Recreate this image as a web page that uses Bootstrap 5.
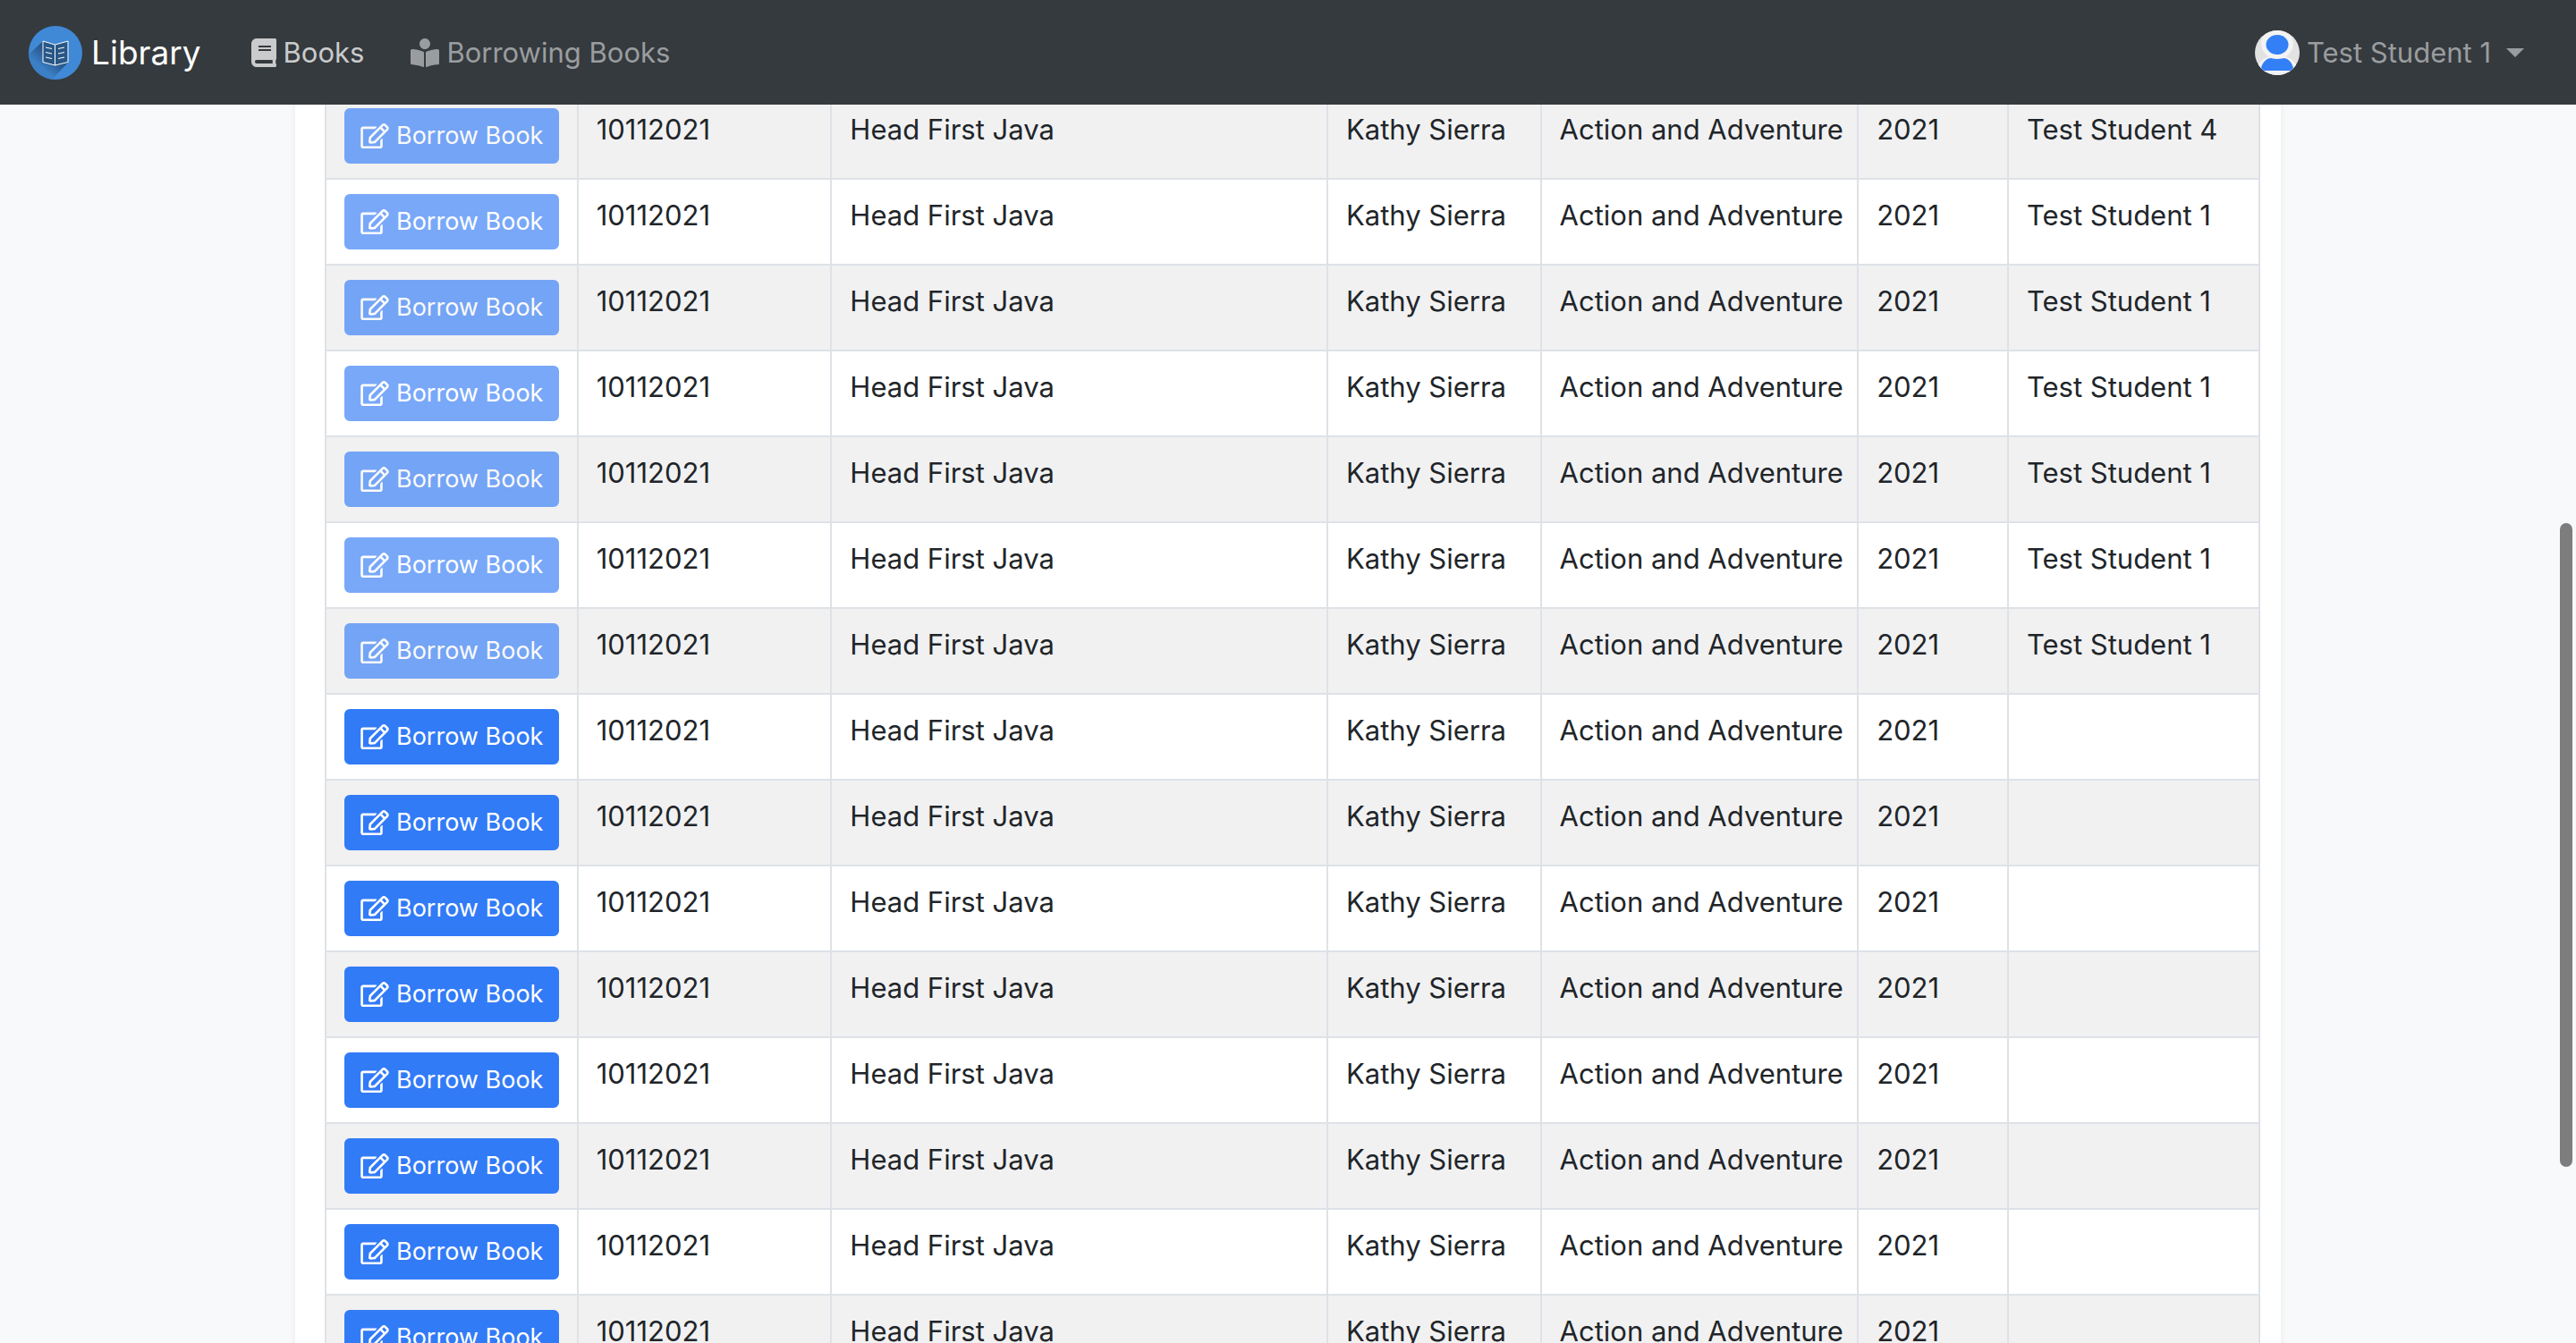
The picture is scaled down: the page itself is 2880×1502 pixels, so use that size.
<!DOCTYPE html>
<html lang="en">
<head>
<meta charset="utf-8">
<meta name="viewport" content="width=device-width, initial-scale=1">
<title>Library</title>
<link href="https://cdn.jsdelivr.net/npm/bootstrap@5.3.0/dist/css/bootstrap.min.css" rel="stylesheet">
<style>
  html { height: 100%; }
  body {
    height: 100%;
    overflow: hidden;
    padding-top: 103px;
    background: #f8f9fb;
    color: #212529;
    font-family: Inter, "Liberation Sans", sans-serif;
    font-size: 31px;
    line-height: 48px;
  }
  .site-nav { height: 117px; padding: 0 58px 0 32px; background: #353a3e; }
  .site-nav .navbar-brand { font-size: 37px; line-height: 60px; gap: 10px; margin-right: 56px; padding: 0; }
  .site-nav .navbar-nav { gap: 52px; }
  .site-nav .nav-link { display: flex; align-items: center; gap: 8px; color: #9a9d9f; white-space: nowrap; }
  .site-nav .nav-link.active { color: #cacbcc; }
  .site-nav .user-link::after { margin-left: 9px; border-top: 10px solid; border-right: 10px solid transparent; border-left: 10px solid transparent; }
  .nav-icon { height: 32px; fill: currentColor; }
  .brand-logo { width: 60px; height: 60px; }
  .user-avatar { width: 50px; height: 50px; }
  .book-panel { max-width: 2220px; padding: 0 23px 32px 33px; background: #fff; box-shadow: 0 4px 8px rgba(0, 0, 0, .075); }
  .book-table { table-layout: fixed; border-color: #dee2e7; --bs-table-striped-bg: #f1f1f2; --bs-table-striped-color: #212529; --bs-table-color: #212529; --bs-table-bg: #fff; }
  .book-table > tbody > tr { border-width: 2px 0; }
  .book-table > tbody > tr > td { height: 96px; padding: 16px 20px; border-width: 0 2px; white-space: nowrap; vertical-align: top; }
  .borrow-btn {
    --bs-btn-bg: #327bf7; --bs-btn-border-color: #327bf7;
    --bs-btn-disabled-bg: #327bf7; --bs-btn-disabled-border-color: #327bf7;
    --bs-btn-disabled-opacity: .65;
    display: flex; align-items: center; gap: 8px; width: 240px; height: 62px;
    padding: 0 16px; border-width: 2px; border-radius: 6px; font-size: 27px; line-height: 42px;
  }
  .borrow-btn svg { width: 32px; height: 28px; fill: currentColor; flex: none; }
  .scroll-thumb { position: fixed; top: 585px; right: 4px; width: 14px; height: 720px; border-radius: 7px; background: #7d7d7d; z-index: 1040; }
</style>
</head>
<body>
<svg class="d-none" aria-hidden="true">
  <symbol id="edit" viewBox="0 0 576 512"><path d="M402.3 344.9l32-32c5-5 13.7-1.5 13.7 5.7V464c0 26.5-21.5 48-48 48H48c-26.5 0-48-21.5-48-48V112c0-26.5 21.5-48 48-48h273.5c7.1 0 10.7 8.6 5.7 13.7l-32 32c-1.5 1.5-3.5 2.3-5.7 2.3H48v352h352V350.5c0-2.1.8-4.1 2.3-5.6zm156.6-201.8L296.3 405.7l-90.4 10c-26.2 2.9-48.5-19.2-45.6-45.6l10-90.4L432.9 17.1c22.9-22.9 59.9-22.9 82.7 0l43.2 43.2c22.9 22.9 22.9 60 .1 82.8zM460.1 174L402 115.9 216.2 301.8l-7.3 65.3 65.3-7.3L460.1 174zm64.8-79.7l-43.2-43.2c-4.1-4.1-10.8-4.1-14.8 0L436 82l58.1 58.1 30.9-30.9c4-4.2 4-10.8-.1-14.9z"/></symbol>
</svg>

<nav class="navbar navbar-expand navbar-dark fixed-top site-nav">
  <a class="navbar-brand d-flex align-items-center" href="#">
    <svg class="brand-logo" viewBox="0 0 60 60" aria-hidden="true">
      <defs>
        <linearGradient id="fall" x1="34" y1="22" x2="14" y2="46" gradientUnits="userSpaceOnUse"><stop offset="0" stop-color="#1f4873"/><stop offset=".5" stop-color="#2a5a90"/><stop offset="1" stop-color="#3b7fc6"/></linearGradient>
        <clipPath id="disc"><circle cx="30" cy="30" r="30"/></clipPath>
      </defs>
      <g clip-path="url(#disc)">
        <rect width="60" height="60" fill="#4089d6"/>
        <path d="M16 17L0 32V60H26L44 41V17L29.500 21Z" fill="url(#fall)"/>
      </g>
      <g fill="#285787" stroke="#fff" stroke-width="1" stroke-linejoin="round">
        <path d="M16 17l13.500 4v23L16 40.500z"/><path d="M44 17l-14.500 4v23L44 40.500z"/>
        <path d="M19 24l7 1.500M19 29.500l7 1.500M19 35l7 1.500M33 25.500l7-1.500M33 31l7-1.500M33 36.500l7-1.500" fill="none"/>
      </g>
    </svg>
    <span>Library</span>
  </a>
  <ul class="navbar-nav">
    <li class="nav-item"><a class="nav-link active p-0" href="#">
      <svg class="nav-icon" viewBox="0 0 448 512" aria-hidden="true"><path d="M448 360V24c0-13.300-10.700-24-24-24H96C43 0 0 43 0 96v320c0 53 43 96 96 96h328c13.300 0 24-10.700 24-24v-16c0-7.500-3.500-14.300-8.900-18.700-4.200-15.400-4.200-59.300 0-74.700 5.400-4.300 8.900-11.100 8.900-18.600zM128 134c0-3.300 2.700-6 6-6h212c3.300 0 6 2.700 6 6v20c0 3.300-2.700 6-6 6H134c-3.300 0-6-2.700-6-6v-20zm0 64c0-3.300 2.700-6 6-6h212c3.300 0 6 2.700 6 6v20c0 3.300-2.700 6-6 6H134c-3.300 0-6-2.700-6-6v-20zm253.400 250H96c-17.700 0-32-14.300-32-32 0-17.600 14.400-32 32-32h285.400c-1.900 17.100-1.900 46.900 0 64z"/></svg>
      <span>Books</span></a></li>
    <li class="nav-item"><a class="nav-link p-0" href="#">
      <svg class="nav-icon" viewBox="0 0 512 512" aria-hidden="true"><path d="M352 96c0-53.020-42.980-96-96-96s-96 42.980-96 96 42.980 96 96 96 96-42.980 96-96zM233.590 241.100c-59.330-36.320-155.430-46.300-203.790-49.050C13.550 191.130 0 203.510 0 219.140v222.800c0 14.330 11.590 26.280 26.490 27.050 43.660 2.290 131.990 10.680 193.040 41.430 9.370 4.720 20.480-1.710 20.480-11.870V252.560c-.01-4.670-2.320-8.950-6.420-11.460zm248.610-49.050c-48.350 2.740-144.460 12.730-203.780 49.050-4.100 2.510-6.410 6.960-6.410 11.630v245.790c0 10.190 11.140 16.630 20.540 11.900 61.040-30.720 149.320-39.110 192.970-41.400 14.900-.78 26.490-12.730 26.490-27.060V219.140c-.01-15.630-13.560-28.010-29.810-27.090z"/></svg>
      <span>Borrowing Books</span></a></li>
  </ul>
  <ul class="navbar-nav ms-auto">
    <li class="nav-item dropdown"><a class="nav-link dropdown-toggle user-link p-0" href="#" role="button" data-bs-toggle="dropdown" aria-expanded="false">
      <svg class="user-avatar" viewBox="0 0 50 50" aria-hidden="true">
        <defs><clipPath id="face"><circle cx="25" cy="25" r="25"/></clipPath></defs>
        <g clip-path="url(#face)">
          <rect width="50" height="50" fill="#e2e2e2"/>
          <ellipse cx="25" cy="15" rx="18" ry="17" fill="#f3f3f3"/><path d="M0 50C2 34 12 28 25 28s23 6 25 22z" fill="#f3f3f3"/>
          <ellipse cx="25" cy="16" rx="12.500" ry="11" fill="#327ff6"/>
          <path d="M7 42C9 35 13 31 18 31Q25 33 32 31C37 31 41 35 43 42L41 45H9z" fill="#327ff6"/>
        </g>
      </svg>
      <span>Test Student 1</span></a></li>
  </ul>
</nav>

<main class="book-panel mx-auto">
  <table class="table table-striped table-bordered book-table mb-0">
    <colgroup><col style="width:13.03%"><col style="width:13.12%"><col style="width:25.65%"><col style="width:11.04%"><col style="width:16.4%"><col style="width:7.76%"><col></colgroup>
    <tbody>
      <tr><td><button type="button" class="btn btn-primary borrow-btn" disabled><svg aria-hidden="true"><use href="#edit"/></svg>Borrow Book</button></td><td>10112021</td><td>Head First Java</td><td>Kathy Sierra</td><td>Action and Adventure</td><td>2021</td><td>Test Student 4</td></tr>
      <tr><td><button type="button" class="btn btn-primary borrow-btn" disabled><svg aria-hidden="true"><use href="#edit"/></svg>Borrow Book</button></td><td>10112021</td><td>Head First Java</td><td>Kathy Sierra</td><td>Action and Adventure</td><td>2021</td><td>Test Student 1</td></tr>
      <tr><td><button type="button" class="btn btn-primary borrow-btn" disabled><svg aria-hidden="true"><use href="#edit"/></svg>Borrow Book</button></td><td>10112021</td><td>Head First Java</td><td>Kathy Sierra</td><td>Action and Adventure</td><td>2021</td><td>Test Student 1</td></tr>
      <tr><td><button type="button" class="btn btn-primary borrow-btn" disabled><svg aria-hidden="true"><use href="#edit"/></svg>Borrow Book</button></td><td>10112021</td><td>Head First Java</td><td>Kathy Sierra</td><td>Action and Adventure</td><td>2021</td><td>Test Student 1</td></tr>
      <tr><td><button type="button" class="btn btn-primary borrow-btn" disabled><svg aria-hidden="true"><use href="#edit"/></svg>Borrow Book</button></td><td>10112021</td><td>Head First Java</td><td>Kathy Sierra</td><td>Action and Adventure</td><td>2021</td><td>Test Student 1</td></tr>
      <tr><td><button type="button" class="btn btn-primary borrow-btn" disabled><svg aria-hidden="true"><use href="#edit"/></svg>Borrow Book</button></td><td>10112021</td><td>Head First Java</td><td>Kathy Sierra</td><td>Action and Adventure</td><td>2021</td><td>Test Student 1</td></tr>
      <tr><td><button type="button" class="btn btn-primary borrow-btn" disabled><svg aria-hidden="true"><use href="#edit"/></svg>Borrow Book</button></td><td>10112021</td><td>Head First Java</td><td>Kathy Sierra</td><td>Action and Adventure</td><td>2021</td><td>Test Student 1</td></tr>
      <tr><td><button type="button" class="btn btn-primary borrow-btn"><svg aria-hidden="true"><use href="#edit"/></svg>Borrow Book</button></td><td>10112021</td><td>Head First Java</td><td>Kathy Sierra</td><td>Action and Adventure</td><td>2021</td><td></td></tr>
      <tr><td><button type="button" class="btn btn-primary borrow-btn"><svg aria-hidden="true"><use href="#edit"/></svg>Borrow Book</button></td><td>10112021</td><td>Head First Java</td><td>Kathy Sierra</td><td>Action and Adventure</td><td>2021</td><td></td></tr>
      <tr><td><button type="button" class="btn btn-primary borrow-btn"><svg aria-hidden="true"><use href="#edit"/></svg>Borrow Book</button></td><td>10112021</td><td>Head First Java</td><td>Kathy Sierra</td><td>Action and Adventure</td><td>2021</td><td></td></tr>
      <tr><td><button type="button" class="btn btn-primary borrow-btn"><svg aria-hidden="true"><use href="#edit"/></svg>Borrow Book</button></td><td>10112021</td><td>Head First Java</td><td>Kathy Sierra</td><td>Action and Adventure</td><td>2021</td><td></td></tr>
      <tr><td><button type="button" class="btn btn-primary borrow-btn"><svg aria-hidden="true"><use href="#edit"/></svg>Borrow Book</button></td><td>10112021</td><td>Head First Java</td><td>Kathy Sierra</td><td>Action and Adventure</td><td>2021</td><td></td></tr>
      <tr><td><button type="button" class="btn btn-primary borrow-btn"><svg aria-hidden="true"><use href="#edit"/></svg>Borrow Book</button></td><td>10112021</td><td>Head First Java</td><td>Kathy Sierra</td><td>Action and Adventure</td><td>2021</td><td></td></tr>
      <tr><td><button type="button" class="btn btn-primary borrow-btn"><svg aria-hidden="true"><use href="#edit"/></svg>Borrow Book</button></td><td>10112021</td><td>Head First Java</td><td>Kathy Sierra</td><td>Action and Adventure</td><td>2021</td><td></td></tr>
      <tr><td><button type="button" class="btn btn-primary borrow-btn"><svg aria-hidden="true"><use href="#edit"/></svg>Borrow Book</button></td><td>10112021</td><td>Head First Java</td><td>Kathy Sierra</td><td>Action and Adventure</td><td>2021</td><td></td></tr>
    </tbody>
  </table>
</main>
<div class="scroll-thumb" aria-hidden="true"></div>
<script src="https://cdn.jsdelivr.net/npm/bootstrap@5.3.0/dist/js/bootstrap.bundle.min.js"></script>
</body>
</html>
